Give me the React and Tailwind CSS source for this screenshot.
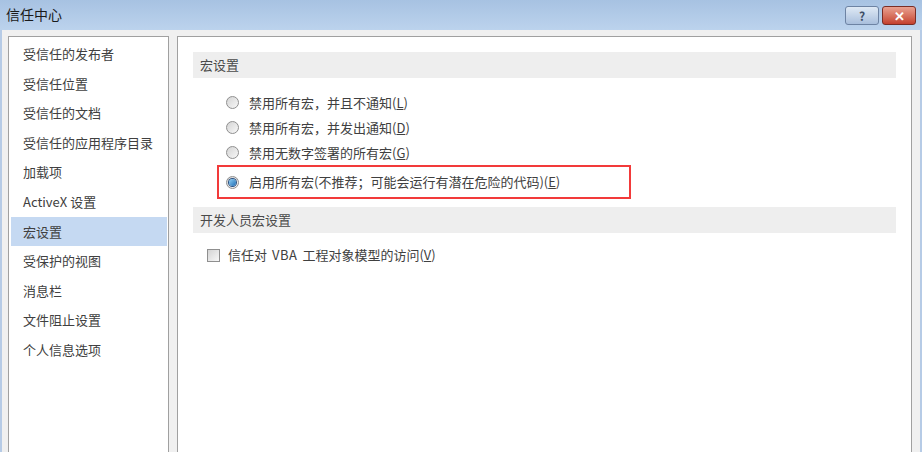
import React from 'react';

const font = { fontFamily: '"Noto Sans CJK SC", "Noto Sans", sans-serif' };

const navItems = [
  '受信任的发布者',
  '受信任位置',
  '受信任的文档',
  '受信任的应用程序目录',
  '加载项',
  'ActiveX 设置',
  '宏设置',
  '受保护的视图',
  '消息栏',
  '文件阻止设置',
  '个人信息选项',
];

const Radio = ({ checked }) => (
  <span className="relative flex h-[13px] w-[13px] shrink-0 items-center justify-center rounded-full border border-[#8f8f8f] bg-gradient-to-br from-[#d4d4d4] to-[#f8f8f8]">
    {checked && <span className="h-[7px] w-[7px] rounded-full bg-gradient-to-br from-[#8fd0f5] to-[#1c6fb5] ring-1 ring-[#2a4f80]" />}
  </span>
);

const RadioRow = ({ label, hotkey, checked }) => (
  <div className="flex h-[25px] items-center gap-[10px]">
    <Radio checked={checked} />
    <span>
      {label}(<span className="underline">{hotkey}</span>)
    </span>
  </div>
);

const SectionHeader = ({ children }) => (
  <div className="flex h-[26px] items-center bg-[#eeeeee] pl-[7px] text-[#4a4a4a]">{children}</div>
);

export default function App() {
  return (
    <div className="flex h-[452px] w-[922px] flex-col overflow-hidden bg-[#f0f0f0] text-[13px] text-[#404040]" style={font}>
      <div className="flex h-[30px] shrink-0 items-center justify-between bg-gradient-to-b from-[#a7c2e2] to-[#bcd3ed] pl-[6px] pr-[6px]">
        <span className="-mt-[2px] text-[14px] text-[#1a1a1a]">信任中心</span>
        <div className="flex gap-[3px] self-start pt-[6px]">
          <button className="flex h-[19px] w-[34px] items-center justify-center rounded-[3px] border border-[#6d83a3] bg-gradient-to-b from-[#dfe9f5] to-[#a9bfdc] text-[12px] font-bold text-[#3d4e66]">?</button>
          <button className="flex h-[19px] w-[34px] items-center justify-center rounded-[3px] border border-[#7a2d25] bg-gradient-to-b from-[#e8a090] to-[#c4402e] text-[13px] font-bold text-white">✕</button>
        </div>
      </div>
      <div className="flex flex-1 gap-[8px] border-l-[2px] border-r-[2px] border-[#b6cbe6] pl-[6px] pr-[8px] pt-[6px]">
        <div className="flex w-[161px] shrink-0 flex-col border-l border-t border-r border-[#a0a0a0] bg-white pt-[2px] pl-[2px] pr-[1px]">
          {navItems.map((item) => (
            <div
              key={item}
              className={`flex h-[29.6px] items-center pl-[12px] ${item === '宏设置' ? 'bg-[#c5d9f2]' : ''}`}
            >
              {item}
            </div>
          ))}
        </div>
        <div className="flex flex-1 flex-col border-l border-t border-r border-[#a0a0a0] bg-white pl-[15px] pr-[15px] pt-[15px]">
          <SectionHeader>宏设置</SectionHeader>
          <div className="flex flex-col pl-[33px] pt-[12px]">
            <RadioRow label="禁用所有宏，并且不通知" hotkey="L" />
            <RadioRow label="禁用所有宏，并发出通知" hotkey="D" />
            <RadioRow label="禁用无数字签署的所有宏" hotkey="G" />
            <div className="-ml-[9px] flex h-[34px] w-[414px] items-center gap-[10px] border-2 border-[#f23a3a] pl-[7px]">
              <Radio checked />
              <span>
                启用所有宏(不推荐；可能会运行有潜在危险的代码)(<span className="underline">E</span>)
              </span>
            </div>
          </div>
          <div className="pt-[8px]">
            <SectionHeader>开发人员宏设置</SectionHeader>
          </div>
          <div className="flex h-[44px] items-center gap-[8px] pl-[14px]">
            <span className="h-[13px] w-[13px] border border-[#8f8f8f] bg-gradient-to-br from-[#d4d4d4] to-[#f8f8f8]" />
            <span>
              信任对<span className="mx-[5px] tracking-[0.5px]">VBA</span>工程对象模型的访问(<span className="underline">V</span>)
            </span>
          </div>
        </div>
      </div>
    </div>
  );
}
